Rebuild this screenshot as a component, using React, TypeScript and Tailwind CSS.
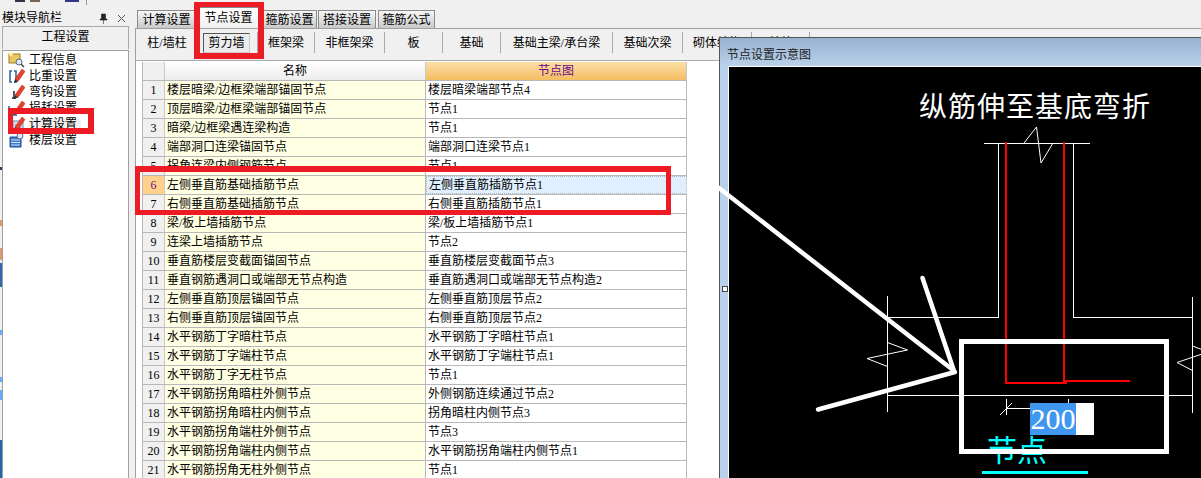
const FONT = { fontFamily: '"Liberation Serif", "Noto Sans CJK SC", sans-serif' };

const ROWS = [
  ["楼层暗梁/边框梁端部锚固节点", "楼层暗梁端部节点4"],
  ["顶层暗梁/边框梁端部锚固节点", "节点1"],
  ["暗梁/边框梁遇连梁构造", "节点1"],
  ["端部洞口连梁锚固节点", "端部洞口连梁节点1"],
  ["拐角连梁内侧钢筋节点", "节点1"],
  ["左侧垂直筋基础插筋节点", "左侧垂直筋插筋节点1"],
  ["右侧垂直筋基础插筋节点", "右侧垂直筋插筋节点1"],
  ["梁/板上墙插筋节点", "梁/板上墙插筋节点1"],
  ["连梁上墙插筋节点", "节点2"],
  ["垂直筋楼层变截面锚固节点", "垂直筋楼层变截面节点3"],
  ["垂直钢筋遇洞口或端部无节点构造", "垂直筋遇洞口或端部无节点构造2"],
  ["左侧垂直筋顶层锚固节点", "左侧垂直筋顶层节点2"],
  ["右侧垂直筋顶层锚固节点", "右侧垂直筋顶层节点2"],
  ["水平钢筋丁字暗柱节点", "水平钢筋丁字暗柱节点1"],
  ["水平钢筋丁字端柱节点", "水平钢筋丁字端柱节点1"],
  ["水平钢筋丁字无柱节点", "节点1"],
  ["水平钢筋拐角暗柱外侧节点", "外侧钢筋连续通过节点2"],
  ["水平钢筋拐角暗柱内侧节点", "拐角暗柱内侧节点3"],
  ["水平钢筋拐角端柱外侧节点", "节点3"],
  ["水平钢筋拐角端柱内侧节点", "水平钢筋拐角端柱内侧节点1"],
  ["水平钢筋拐角无柱外侧节点", "节点1"],
];

const SUB_TABS: [string, string][] = [
  ["柱/墙柱", "w-[58px]"],
  ["剪力墙", "w-[62px]"],
  ["框架梁", "w-[57px]"],
  ["非框架梁", "w-[70px]"],
  ["板", "w-[58px]"],
  ["基础", "w-[58px]"],
  ["基础主梁/承台梁", "w-[112px]"],
  ["基础次梁", "w-[70px]"],
  ["砌体结构", "w-[69px]"],
  ["其他", "w-[58px]"],
];

function Pencil() {
  return (
    <>
      <path d="M7 11 L14 1 L17 3.5 L10 13.5 Z" fill="#e8402c" stroke="#b02418" strokeWidth="0.5" />
      <path d="M7 11 L6 15 L10 13.5 Z" fill="#333" />
    </>
  );
}

function NavIcon({ kind }: { kind: number }) {
  return (
    <svg width="17" height="16" viewBox="0 0 17 16" className="shrink-0">
      {kind === 0 && (
        <>
          <rect x="1" y="2" width="11" height="9" fill="#e8c860" stroke="#9a7a20" />
          <circle cx="3" cy="2" r="2" fill="#fff2a0" />
          <circle cx="11" cy="10" r="3" fill="#dfe9f5" stroke="#5a6a80" />
          <path d="M13 12 L16 15" stroke="#444" strokeWidth="1.5" />
        </>
      )}
      {kind === 1 && (
        <>
          <path d="M4 3 H2 V14 H4 M6 3 H8 V14 H6" fill="none" stroke="#2a5fa8" strokeWidth="1.5" />
          <Pencil />
        </>
      )}
      {kind === 2 && (
        <>
          <path d="M6 7 V14 M4 14 H8" fill="none" stroke="#222" strokeWidth="1.5" />
          <Pencil />
        </>
      )}
      {kind === 3 && (
        <>
          <path d="M1 6 V15 H9 M3 9 L6 14" fill="none" stroke="#2a5fa8" strokeWidth="1.5" />
          <Pencil />
        </>
      )}
      {kind === 4 && (
        <>
          <rect x="5" y="5" width="10" height="10" fill="#cfe0f4" stroke="#6a8ab0" />
          <path d="M7 9 H13 M7 11 H13 M7 13 H13" stroke="#6a8ab0" />
          <Pencil />
        </>
      )}
      {kind === 5 && (
        <>
          <path d="M2 5 H13 V15 H2 Z" fill="#3a78c8" stroke="#1e4a90" />
          <path d="M3 8 H12 M3 10.5 H12 M3 13 H12" stroke="#cfe4ff" />
          <circle cx="12" cy="4" r="3" fill="#dfe9f5" stroke="#5a6a80" />
        </>
      )}
    </svg>
  );
}

function NavPanel() {
  const items = ["工程信息", "比重设置", "弯钩设置", "损耗设置", "计算设置", "楼层设置"];
  return (
    <div className="w-[130px] shrink-0 flex flex-col pt-[10px] pl-[2px] pr-[1px]">
      <div className="h-[16px] flex items-center justify-between pr-[3px]">
        <span>模块导航栏</span>
        <span className="flex items-center gap-[9px]">
          <svg width="9" height="11" viewBox="0 0 9 11">
            <path d="M2.5 1 H6.5 V6 H8 V7 H1 V6 H2.5 Z M4.5 7 V11" fill="#222" stroke="#222" strokeWidth="0.6" />
          </svg>
          <svg width="9" height="9" viewBox="0 0 9 9">
            <path d="M1 1 L8 8 M8 1 L1 8" stroke="#555" />
          </svg>
        </span>
      </div>
      <div className="h-[23px] pb-[2px] flex items-center justify-center bg-[#f0f0f0] border-t border-l border-r border-[#a8a8a8]">
        工程设置
      </div>
      <div className="flex-1 bg-white border border-[#a0a0a0] border-b-0 pl-[5px] pt-[1px] mt-px">
        {items.map((name, i) => (
          <div key={name} className="h-[16px] flex items-center gap-[4px]">
            <NavIcon kind={i} />
            <span className={i === 4 ? "bg-[#f0f0f0] rounded-sm pr-1" : ""}>{name}</span>
          </div>
        ))}
      </div>
    </div>
  );
}

function MainTabs() {
  const cls =
    "h-[18px] flex items-center justify-center border border-b-0 border-[#8a8a8a] bg-gradient-to-b from-[#f6f6f6] to-[#c9c9c9]";
  return (
    <div className="h-[18px] flex items-end pl-[2px] relative">
      <div className={`${cls} w-[59px]`}>计算设置</div>
      <div className="h-[21px] w-[61px] ml-[2px] flex items-center justify-center bg-gradient-to-b from-white to-[#f0f0f0] border border-b-0 border-[#8a8a8a]">
        节点设置
      </div>
      <div className={`${cls} w-[55px] ml-[3px]`}>箍筋设置</div>
      <div className={`${cls} w-[58px] ml-[1px]`}>搭接设置</div>
      <div className={`${cls} w-[57px] ml-[2px]`}>箍筋公式</div>
    </div>
  );
}

function SubTabs() {
  return (
    <div className="h-[32px] flex items-start pt-[3px] pl-[2px] bg-[#f0f0f0] border-b border-[#ababab]">
      {SUB_TABS.map(([name, w], i) => (
        <div
          key={name}
          className={`${w} h-[21px] flex items-center justify-center border-r border-[#a8a8a8] ${i === 0 ? "border-r-0" : ""}`}
        >
          {i === 1 ? (
            <span className="w-[47px] h-[20px] flex items-center justify-center bg-[#ececec] border border-[#555] border-r-[#ccc] border-b-[#ccc]">
              {name}
            </span>
          ) : (
            name
          )}
        </div>
      ))}
    </div>
  );
}

function Grid() {
  return (
    <div className="flex-1 bg-white pl-[6px] pt-px overflow-hidden">
      <div className="w-[545px] border-l border-[#b8b8b8]">
        <div className="h-[19px] flex border-b border-[#b8b8b8]">
          <div className="w-[22px] bg-[#f0f0f0] border-r border-[#c8c8c8]" />
          <div className="w-[261px] flex items-center justify-center bg-gradient-to-b from-white to-[#ececec] border-r border-[#c8c8c8]">
            名称
          </div>
          <div className="w-[261px] flex items-center justify-center bg-gradient-to-b from-[#fbdfa6] to-[#f4bc60] text-[#6a0a8a] border-r border-[#c8c8c8]">
            节点图
          </div>
        </div>
        {ROWS.map(([name, node], i) => {
          const active = i === 5;
          return (
            <div key={i} className="h-[19px] flex border-b border-[#b8b8b8]">
              <div
                className={`w-[22px] flex items-center justify-center border-r border-[#c8c8c8] ${
                  active ? "bg-[#ffd18a] text-[#6a0a8a]" : "bg-[#f0f0f0]"
                }`}
              >
                {i + 1}
              </div>
              <div className="w-[261px] flex items-center pl-[2px] bg-[#ffffe3] border-r border-[#b8b8b8] whitespace-nowrap">
                {name}
              </div>
              <div
                className={`w-[261px] flex items-center pl-[2px] border-r border-[#b8b8b8] whitespace-nowrap ${
                  active ? "bg-[#e0efff] border border-dotted border-[#333]" : "bg-white"
                }`}
              >
                {node}
              </div>
            </div>
          );
        })}
      </div>
    </div>
  );
}

function NodeDrawing() {
  return (
    <svg className="absolute left-0 top-0" width="1201" height="478" shapeRendering="crispEdges">
      <g stroke="#fff" fill="none" strokeWidth="1">
        <path d="M983.5 143.5 H1090" />
        <path d="M998.5 143 V317.5 H887.5 M1073.5 143 V317.5 H1192.5" />
        <path d="M887.5 296 V412 M1192.5 297 V413 M887.5 395.5 H1192.5" />
        <path d="M1006.5 399 V415 M1006 408.5 H1030 M1068.5 399 V403" />
      </g>
      <g stroke="#fff" fill="none" strokeWidth="1" shapeRendering="auto">
        <path d="M1024 143 L1036.5 127 L1041 163 L1053 143" />
        <path d="M887.5 342.5 L907.5 350 L867 358.5 L887.5 366.5" />
        <path d="M1192.5 346 L1208 352 L1177 362.5 L1192.5 370.5" />
        <path d="M1000 415 L1012 403" />
      </g>
      <g stroke="#f00" fill="none" strokeWidth="2">
        <path d="M1006 142 V382.5 H1067" />
        <path d="M1064 142 V380.5 H1130" />
      </g>
      <rect x="982" y="471" width="106" height="3" fill="#00ffff" />
    </svg>
  );
}

function NodeDialog() {
  return (
    <div className="absolute left-[719px] top-[37px] w-[490px] h-[450px] border-l border-t border-[#555] bg-[#b9d1ea] pl-[8px] flex flex-col">
      <div className="h-[28px] -ml-[8px] pl-[7px] pt-[5px] flex items-center bg-gradient-to-b from-[#97b1cf] to-[#b9d1ea] text-[#222]">
        节点设置示意图
      </div>
      <div className="flex-1 bg-black border-l border-t border-white" />
      <div className="absolute left-[2px] top-[248px] w-[6px] h-[6px] bg-white border border-[#444]" />
    </div>
  );
}

function Annotations() {
  return (
    <>
      <div className="absolute left-[135px] top-[166px] w-[536px] h-[49px] border-[5px] border-t-[6px] border-[#ed1c24]" />
      <div className="absolute left-[194px] top-[2px] w-[70px] h-[57px] border-[6px] border-t-[5px] border-[#ed1c24]" />
      <div className="absolute left-[8px] top-[108px] w-[86px] h-[26px] border-[6px] border-l-[5px] border-[#ed1c24]" />
      <div className="absolute left-[959px] top-[339px] w-[210px] h-[115px] border-[5px] border-white" />
      <svg className="absolute left-0 top-0" width="1201" height="478">
        <g stroke="#fff" strokeWidth="4.5" strokeLinecap="round" fill="none">
          <path d="M719 188 L953 370" />
          <path d="M922.5 278 L954 371" />
          <path d="M818 409.5 L955 372" />
        </g>
      </svg>
    </>
  );
}

export default function App() {
  return (
    <div className="relative w-[1201px] h-[478px] overflow-hidden bg-[#f0f0f0] text-[12px] leading-none text-black" style={FONT}>
      <div className="absolute left-[15px] top-0 w-[10px] h-[2px] bg-[#334]" />
      <div className="absolute left-[30px] top-0 w-[10px] h-[2px] bg-[#765]" />
      <div className="absolute left-[65px] top-0 w-[14px] h-[2px] bg-[#338]" />
      <div className="absolute left-[86px] top-0 w-px h-[5px] bg-[#999]" />

      <div className="absolute left-0 top-[167px] w-[2px] h-[3px] bg-[#246]" />
      <div className="absolute left-0 top-[220px] w-[2px] h-[6px] bg-[#d96]" />
      <div className="absolute left-0 top-[248px] w-[2px] h-[12px] bg-[#d96]" />
      <div className="absolute left-0 top-[263px] w-[2px] h-[24px] bg-[#36a]" />
      <div className="absolute left-0 top-[330px] w-[2px] h-[5px] bg-[#6af]" />
      <div className="absolute left-0 top-[377px] w-[2px] h-[5px] bg-[#6af]" />
      <div className="absolute left-0 top-[390px] w-[2px] h-[10px] bg-[#6af]" />
      <div className="absolute left-0 top-[440px] w-[2px] h-[38px] bg-[#26a]" />

      <div className="flex h-full">
        <NavPanel />
        <div className="w-[5px] shrink-0" />
        <div className="flex-1 flex flex-col pt-[10px]">
          <MainTabs />
          <div className="flex-1 flex flex-col border-l border-t border-[#a0a0a0]">
            <SubTabs />
            <Grid />
          </div>
        </div>
      </div>

      <NodeDialog />
      <NodeDrawing />
      <div className="absolute left-[919px] top-[94px] text-[28px] tracking-[1px] text-white whitespace-nowrap">纵筋伸至基底弯折</div>
      <div className="absolute left-[1030px] top-[403px] w-[64px] h-[32px] bg-white flex">
        <span className="w-[46px] h-full flex items-center justify-center bg-[#3f97ef] text-white text-[30px]">200</span>
      </div>
      <div className="absolute left-[987px] top-[436px] text-[30px] text-[#00ffff] whitespace-nowrap">节点</div>
      <Annotations />
    </div>
  );
}
